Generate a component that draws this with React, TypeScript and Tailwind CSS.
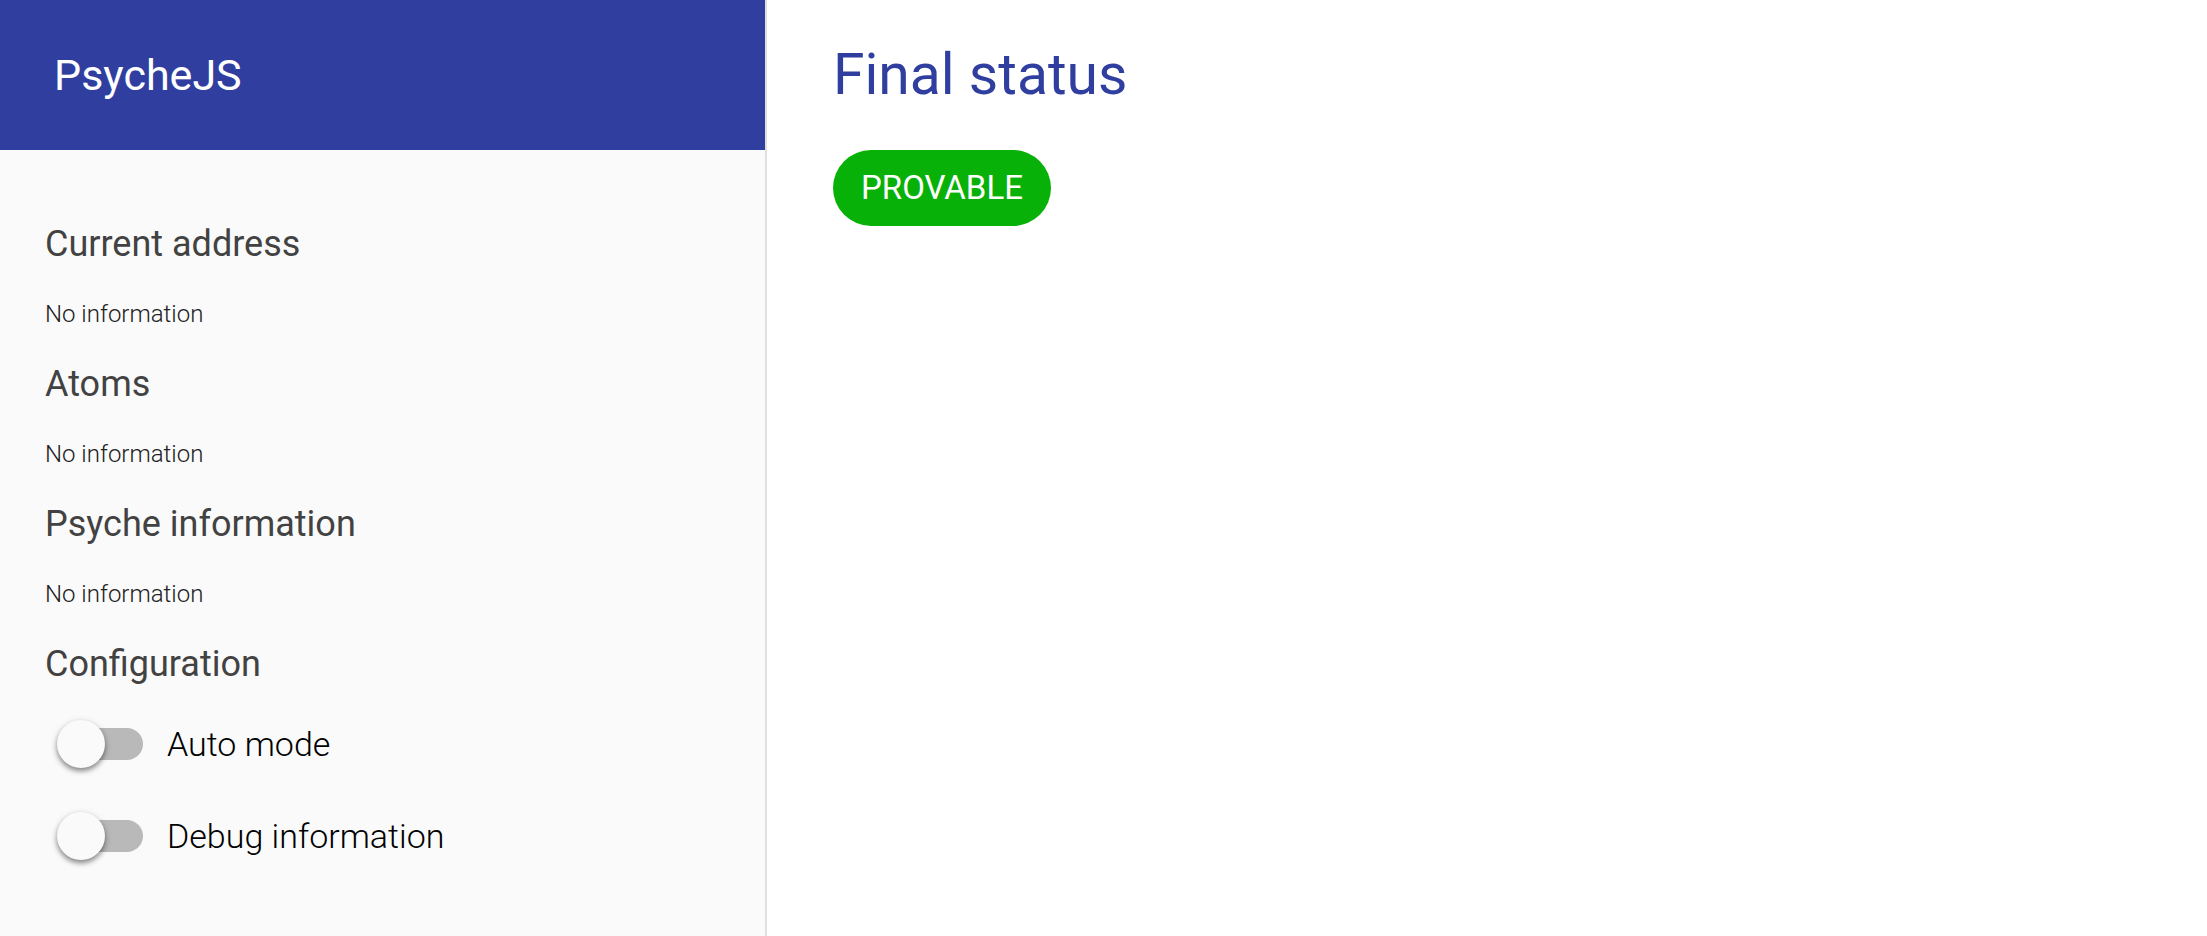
import React from "react";

function SectionTitle({ children }: { children: string }) {
  return <h2 className="text-4xl leading-12 text-[#424242]">{children}</h2>;
}

function Info({ title }: { title: string }) {
  return (
    <section>
      <SectionTitle>{title}</SectionTitle>
      <p className="mt-[30px] mb-[30px] text-2xl leading-8 font-light text-[#212121]">No information</p>
    </section>
  );
}

function Toggle({ label }: { label: string }) {
  return (
    <label className="flex h-12 cursor-pointer items-center gap-6 pl-3">
      <span className="relative flex h-12 w-[86px] items-center">
        <input
          type="checkbox"
          role="switch"
          className="peer ml-3 h-8 w-[74px] appearance-none rounded-full bg-[#b9b9b9] checked:bg-[#303f9f]/50"
        />
        <span className="absolute left-0 size-12 rounded-full bg-[#fafafa] shadow-[0_2px_8px_rgba(0,0,0,0.12),0_3px_5px_rgba(0,0,0,0.4)] peer-checked:left-10 peer-checked:bg-[#303f9f]" />
      </span>
      <span className="text-[34px] font-light text-black">{label}</span>
    </label>
  );
}

export default function App() {
  return (
    <div className="flex min-h-screen bg-white font-['Roboto',sans-serif]">
      <aside className="flex w-[767px] shrink-0 flex-col border-r-2 border-[#e0e0e0] bg-[#fafafa]">
        <header className="flex h-[150px] items-center bg-[#303f9f] px-[54px]">
          <h1 className="text-[43px] text-white">PsycheJS</h1>
        </header>
        <div className="px-[45px] pt-[70px]">
          <Info title="Current address" />
          <Info title="Atoms" />
          <Info title="Psyche information" />
          <SectionTitle>Configuration</SectionTitle>
          <div className="mt-8 flex flex-col gap-11">
            <Toggle label="Auto mode" />
            <Toggle label="Debug information" />
          </div>
        </div>
      </aside>
      <main className="flex flex-1 flex-col items-start px-[66px] pt-10">
        <h2 className="text-[57px] leading-[70px] text-[#303f9f]">Final status</h2>
        <span className="mt-10 flex h-[76px] items-center rounded-full bg-[#08b108] px-7 text-[33px] text-white">
          PROVABLE
        </span>
      </main>
    </div>
  );
}
